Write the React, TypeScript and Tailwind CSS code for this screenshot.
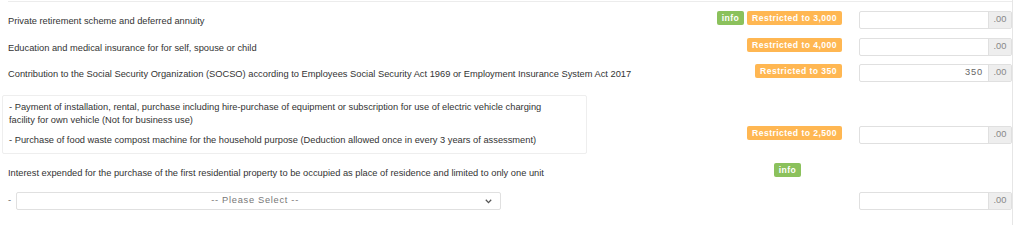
import React from "react";

function Badge({ kind, children }: { kind: "info" | "warn"; children: React.ReactNode }) {
  const cls =
    kind === "info"
      ? "bg-[#8bc15c] w-[27px]"
      : "bg-[#ffb752]";
  return (
    <span
      className={`${cls} inline-flex h-[14px] items-center justify-center rounded-[2px] px-[5px] text-[8.6px] font-bold leading-none tracking-[0.45px] text-white`}
    >
      {children}
    </span>
  );
}

function MoneyInput({ value }: { value?: string }) {
  return (
    <div className="flex h-[18px] w-[153px] rounded-[2px] border border-[#e0e0e0] bg-white">
      <div className="flex flex-1 items-center justify-end pr-[5px] text-[9.3px] tracking-[0.8px] text-[#666]">
        {value}
      </div>
      <div className="flex w-[23px] items-center justify-center border-l border-[#e0e0e0] bg-[#eeeeee] text-[9.3px] text-[#888]">
        .00
      </div>
    </div>
  );
}

function Row({
  label,
  badges,
  value,
  className,
}: {
  label: string;
  badges: React.ReactNode;
  value?: string;
  className: string;
}) {
  return (
    <div className={`flex items-start ${className}`}>
      <div className="flex h-[18px] flex-1 items-center pl-2 pt-[3px]">{label}</div>
      <div className="flex gap-[3px]">{badges}</div>
      <div className="ml-[17px]">
        <MoneyInput value={value} />
      </div>
    </div>
  );
}

export default function App() {
  return (
    <div className="h-[225px] w-[1013px] border-r border-[#e6e6e6] bg-white pt-px font-['Liberation_Sans',Arial,sans-serif] text-[9.3px] text-[#333]">
      <div className="ml-2 border-t border-[#ececec]" />
      <Row
        className="mt-[9px]"
        label="Private retirement scheme and deferred annuity"
        badges={
          <>
            <Badge kind="info">info</Badge>
            <Badge kind="warn">Restricted to 3,000</Badge>
          </>
        }
      />
      <Row
        className="mt-[9px]"
        label="Education and medical insurance for for self, spouse or child"
        badges={<Badge kind="warn">Restricted to 4,000</Badge>}
      />
      <Row
        className="mt-[8px]"
        label="Contribution to the Social Security Organization (SOCSO) according to Employees Social Security Act 1969 or Employment Insurance System Act 2017"
        badges={
          <span className="pl-[2px]">
            <Badge kind="warn">Restricted to 350</Badge>
          </span>
        }
        value="350"
      />
      <div className="mt-[13px] flex items-start">
        <div className="ml-[2px] w-[585px] rounded-[2px] border border-[#eeeeee] pb-[6px] pl-[6px] pt-[5px] leading-[13px]">
          <div>
            - Payment of installation, rental, purchase including hire-purchase of equipment or subscription for use of electric vehicle charging
            <br />
            facility for own vehicle (Not for business use)
          </div>
          <div className="mt-[7px]">
            - Purchase of food waste compost machine for the household purpose (Deduction allowed once in every 3 years of assessment)
          </div>
        </div>
        <div className="mt-[31px] flex flex-1 items-start justify-end">
          <Badge kind="warn">Restricted to 2,500</Badge>
          <div className="ml-[17px]">
            <MoneyInput />
          </div>
        </div>
      </div>
      <div className="mt-[9px] flex items-start">
        <div className="flex h-[18px] flex-1 items-center pl-2 pt-[3px]">
          Interest expended for the purchase of the first residential property to be occupied as place of residence and limited to only one unit
        </div>
        <div className="mr-[211px]">
          <Badge kind="info">info</Badge>
        </div>
      </div>
      <div className="mt-[11px] flex items-start">
        <div className="flex h-[18px] items-center pl-2 text-[#666]">-</div>
        <div className="ml-[5px] flex h-[18px] w-[485px] items-center rounded-[2px] border border-[#e0e0e0] bg-white">
          <div className="flex-1 pl-[8px] text-center tracking-[0.7px] text-[#777]">-- Please Select --</div>
          <svg className="mr-[8px]" width="7" height="5" viewBox="0 0 7 5">
            <path d="M0.8 0.8 L3.5 3.6 L6.2 0.8" fill="none" stroke="#555" strokeWidth="1.3" />
          </svg>
        </div>
        <div className="ml-auto">
          <MoneyInput />
        </div>
      </div>
    </div>
  );
}
